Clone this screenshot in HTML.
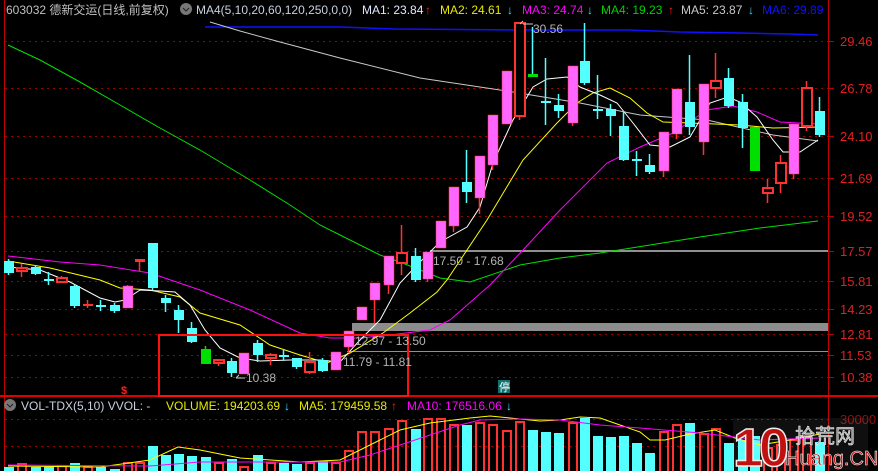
<!DOCTYPE html>
<html><head><meta charset="utf-8"><style>
html,body{margin:0;padding:0;background:#000;width:878px;height:471px;overflow:hidden}
svg{display:block}
text{font-family:"Liberation Sans","Noto Sans CJK SC",sans-serif}
</style></head><body>
<svg id="s" width="878" height="471" xmlns="http://www.w3.org/2000/svg" font-size="12">
<g stroke="#a00000" stroke-dasharray="2,4" stroke-width="1">
<line x1="5" x2="828" y1="41.5" y2="41.5"/><line x1="5" x2="828" y1="88.5" y2="88.5"/><line x1="5" x2="828" y1="136.5" y2="136.5"/><line x1="5" x2="828" y1="178.5" y2="178.5"/><line x1="5" x2="828" y1="216.5" y2="216.5"/><line x1="5" x2="828" y1="251.5" y2="251.5"/><line x1="5" x2="828" y1="281.5" y2="281.5"/><line x1="5" x2="828" y1="309.5" y2="309.5"/><line x1="5" x2="828" y1="334.5" y2="334.5"/><line x1="5" x2="828" y1="355.5" y2="355.5"/><line x1="5" x2="828" y1="377.5" y2="377.5"/>
<line x1="5" x2="828" y1="419.5" y2="419.5"/><line x1="5" x2="828" y1="446.5" y2="446.5"/>
</g>
<g stroke="#c00000"><line x1="4.5" x2="4.5" y1="0" y2="471"/><line x1="828.5" x2="828.5" y1="0" y2="471"/>
<line x1="828" x2="834" y1="41.5" y2="41.5"/><line x1="828" x2="834" y1="88.5" y2="88.5"/><line x1="828" x2="834" y1="136.5" y2="136.5"/><line x1="828" x2="834" y1="178.5" y2="178.5"/><line x1="828" x2="834" y1="216.5" y2="216.5"/><line x1="828" x2="834" y1="251.5" y2="251.5"/><line x1="828" x2="834" y1="281.5" y2="281.5"/><line x1="828" x2="834" y1="309.5" y2="309.5"/><line x1="828" x2="834" y1="334.5" y2="334.5"/><line x1="828" x2="834" y1="355.5" y2="355.5"/><line x1="828" x2="834" y1="377.5" y2="377.5"/>
</g>
<line x1="0" x2="878" y1="396" y2="396" stroke="#e00000" stroke-width="2"/>
<rect x="430" y="250" width="398" height="2" fill="#909090"/>
<rect x="352" y="323" width="476" height="8" fill="#8c8c8c"/>
<rect x="347" y="351" width="481" height="1" fill="#909090"/>
<g fill="none" stroke-width="1">
<polyline stroke="#1010ff" stroke-width="1.5" points="205,27 340,27 395,29 520,30 630,30 680,32 740,33 790,34 818,35"/>
<polyline stroke="#c8c8c8" points="210,22 240,31 280,42 340,58 420,78 513,92 580,103 640,115 707,120 773,135 818,141"/>
<polyline stroke="#00e000" points="8,45 40,60 80,82 120,105 160,128 200,150 250,180 290,205 320,225 350,240 380,255 400,262 440,278 470,282 520,265 560,258 600,253 650,245 700,237 760,228 818,221"/>
<polyline stroke="#ff00ff" points="8,256 60,262 100,265 150,273 200,290 250,310 300,333 330,338 360,338 390,335 430,330 450,320 490,285 523,250 560,210 607,163 640,147 673,133 707,110 733,106 757,112 780,122 818,124"/>
<polyline stroke="#ffff00" points="8,261 50,268 100,280 120,288 150,290 180,297 200,313 240,325 270,345 300,355 327,363 350,353 383,333 410,313 437,292 447,280 487,220 523,160 557,123 577,103 593,93 610,88 630,98 647,113 663,122 690,123 740,125 773,128 820,127"/>
<polyline stroke="#ffffff" points="8,267 40,270 70,282 100,298 115,302 125,300 140,290 160,291 175,292 190,305 205,330 220,348 240,358 260,361 290,360 320,360 340,362 360,340 380,320 400,283 420,262 440,242 467,227 480,207 493,163 513,120 533,87 547,79 567,77 580,87 600,95 617,103 633,123 650,145 670,147 690,137 710,103 728,97 740,102 757,117 773,140 783,152 800,152 818,140"/>
</g>
<g id="cd"></g>
<rect x="159" y="335" width="249" height="61" fill="none" stroke="#ff1010" stroke-width="2"/>
<g fill="#b4b4b4" style="font-size:12px">
<text x="533" y="33">30.56</text><text x="246" y="382">10.38</text>
<text x="433" y="265">17.50 - 17.68</text><text x="355" y="345">12.97 - 13.50</text><text x="343" y="366">11.79 - 11.81</text>
</g>
<path d="M520,24 l3,-3 M523,24 h10 M236,378 h9 M236,378 l3,-3" stroke="#ccc" fill="none"/>
<g fill="#e02020" style="font-size:13px">
<text x="840" y="46">29.46</text><text x="840" y="93">26.78</text><text x="840" y="141">24.10</text><text x="840" y="183">21.69</text><text x="840" y="221">19.52</text><text x="840" y="256">17.57</text><text x="840" y="286">15.81</text><text x="840" y="314">14.23</text><text x="840" y="339">12.81</text><text x="840" y="360">11.53</text><text x="840" y="382">10.38</text>
<text x="840" y="424" fill="#901010">30000</text>
</g>
<text x="121" y="394" fill="#ff2020" style="font-size:11px;font-weight:bold">$</text>
<rect x="498" y="380" width="12" height="13" fill="#107070"/><text x="499" y="391" fill="#fff" style="font-size:11px">停</text>
<text x="6" y="14" fill="#c0c0c0">603032 德新交运(日线,前复权)</text>
<circle cx="186" cy="9" r="6" fill="#777"/><path d="M183,8 l3,3 l3,-3" stroke="#222" fill="none"/>
<text x="196" y="14" fill="#c8d0e0">MA4(5,10,20,60,120,250,0,0)</text>
<text x="362" y="14" fill="#e0e8ff">MA1: 23.84</text><text x="425" y="14" fill="#ff2020">↑</text>
<text x="440" y="14" fill="#e8e800">MA2: 24.61</text><text x="507" y="14" fill="#40e0ff">↓</text>
<text x="522" y="14" fill="#ff00ff">MA3: 24.74</text><text x="587" y="14" fill="#40e0ff">↓</text>
<text x="601" y="14" fill="#00d000">MA4: 19.23</text><text x="668" y="14" fill="#ff2020">↑</text>
<text x="681" y="14" fill="#c8c8c8">MA5: 23.87</text><text x="748" y="14" fill="#40e0ff">↓</text>
<text x="762" y="14" fill="#1010ff">MA6: 29.89</text>
<circle cx="10" cy="405" r="6" fill="#777"/><path d="M7,404 l3,3 l3,-3" stroke="#222" fill="none"/>
<text x="21" y="410" fill="#c8d0e0">VOL-TDX(5,10) VVOL: -</text>
<text x="166" y="410" fill="#e8e800">VOLUME: 194203.69</text><text x="284" y="410" fill="#40e0ff">↓</text>
<text x="299" y="410" fill="#e8e800">MA5: 179459.58</text><text x="391" y="410" fill="#ff2020">↑</text>
<text x="407" y="410" fill="#ff00ff">MA10: 176516.06</text><text x="506" y="410" fill="#40e0ff">↓</text>
<g id="vb"></g>
<g fill="none" stroke-width="1">
<polyline stroke="#ffff00" points="8,466 100,467 150,460 178,447 200,450 240,458 300,462 340,460 360,450 380,440 400,430 430,423 470,418 490,416 510,418 540,421 560,420 580,417 600,418 620,425 640,432 650,440 665,440 690,434 715,430 735,438 760,445 790,440 820,434"/>
<polyline stroke="#ff00ff" points="8,465 150,466 200,462 250,462 340,462 370,455 400,445 430,435 460,425 480,420 520,419 560,420 600,425 640,428 700,433 760,440 820,438"/>
</g>
<rect x="733" y="418" width="135" height="52" fill="#fff" opacity="0.06"/>
<text x="733" y="466" fill="#c01010" stroke="#eee" stroke-width="1.5" style="font-size:54px;font-weight:bold;letter-spacing:-4px">10</text>
<text x="795" y="443" fill="#999" stroke="#fff" stroke-width="0.5" style="font-size:20px">拾荒网</text>
<text x="785" y="465" fill="#c01010" stroke="#fff" stroke-width="0.5" style="font-size:20px">Huang.CN</text>
</svg>
<script>
var C=[[8,'c',261,273,259,275],[21,'r',268,271,264,277],[35,'c',267,274,265,275],[48,'c',279,281,272,285],[61,'r',278,282,276,282],[74,'c',286,306,285,308],[87,'rf',304,306,300,308],[100,'c',305,307,300,311],[114,'c',305,311,303,313],[127,'p',286,308,285,308],[139,'rf',259,262,259,271],[152,'c',243,288,243,290],[165,'c',298,303,295,312],[178,'c',310,320,305,333],[191,'c',328,342,322,343],[205,'g',349,364,346,364],[218,'r',360,363,360,366],[231,'c',361,373,358,377],[243,'p',353,374,353,374],[257,'c',343,355,340,362],[270,'r',355,358,353,365],[283,'c',355,357,349,361],[296,'c',358,367,358,369],[309,'r',362,372,352,374],[322,'c',360,371,358,372],[335,'p',352,370,352,370],[348,'p',331,347,331,353],[361,'p',307,320,307,320],[374,'p',283,300,283,323],[388,'p',256,285,256,294],[401,'r',253,263,225,275],[415,'c',256,280,248,282],[427,'p',252,279,252,282],[440,'p',221,248,221,248],[453,'p',187,226,187,232],[466,'c',182,192,150,203],[479,'p',156,198,156,214],[492,'p',115,165,115,170],[506,'p',71,124,71,124],[519,'r',23,116,22,120],[532,'gc',74,77,27,77],[545,'c',101,103,58,125],[558,'c',105,111,94,118],[572,'p',66,123,66,126],[584,'c',61,83,23,85],[597,'c',109,111,75,119],[610,'c',109,116,104,136],[623,'c',126,160,111,161],[636,'c',159,161,151,176],[649,'c',165,172,154,174],[663,'p',132,171,132,177],[676,'p',89,134,89,139],[689,'c',102,127,55,135],[703,'p',84,142,84,155],[715,'r',81,88,53,98],[728,'c',78,106,68,108],[742,'c',102,128,94,148],[754,'g',127,171,127,171],[767,'r',188,193,179,203],[780,'r',163,183,155,193],[793,'p',124,174,124,179],[806,'r',88,126,81,131],[819,'c',111,135,97,137]];
var h='';C.forEach(function(c){var x=c[0],t=c[1],bt=c[2],bb=c[3],wt=c[4],wb=c[5];
var wc=(t=='c'||t=='gc')?'#54ffff':(t=='g'?'#00e000':'#ff3232');
h+='<line x1="'+(x+.5)+'" x2="'+(x+.5)+'" y1="'+wt+'" y2="'+wb+'" stroke="'+wc+'" stroke-width="1.5"/>';
var f=t=='c'?'#54ffff':t=='p'?'#ff66ff':(t=='g'||t=='gc')?'#00e000':t=='rf'?'#ff3232':'#000';
var hh=Math.max(bb-bt,2);
if(t=='r')h+='<rect x="'+(x-4)+'" y="'+bt+'" width="10" height="'+hh+'" fill="#000" stroke="#ff3232" stroke-width="2"/>';
else h+='<rect x="'+(x-4)+'" y="'+bt+'" width="10" height="'+hh+'" fill="'+f+'"'+(t=='p'?' stroke="#ff3232" stroke-width="0.5"':'')+'/>';});
document.getElementById('cd').innerHTML=h;
var V=[[8,'c',467],[21,'r',464],[35,'c',467],[48,'c',467],[61,'r',466],[74,'c',463],[87,'r',467],[100,'c',467],[114,'c',469],[127,'r',463],[139,'r',463],[152,'c',446],[165,'c',455],[178,'c',454],[191,'c',456],[205,'c',457],[218,'r',463],[231,'c',459],[243,'r',467],[257,'c',455],[270,'r',463],[283,'c',463],[296,'c',464],[309,'r',463],[322,'c',461],[335,'r',463],[348,'r',451],[361,'r',432],[374,'r',432],[388,'r',429],[401,'r',421],[415,'c',429],[427,'r',419],[440,'r',419],[453,'r',425],[466,'c',425],[479,'r',423],[492,'r',425],[506,'r',431],[519,'r',422],[532,'c',430],[545,'c',432],[558,'c',433],[572,'r',423],[584,'c',418],[597,'c',436],[610,'c',437],[623,'c',436],[636,'c',443],[649,'c',453],[663,'r',432],[676,'r',425],[689,'c',423],[703,'r',434],[715,'r',429],[728,'c',443],[742,'c',440],[754,'c',436],[767,'r',448],[780,'r',445],[793,'r',440],[806,'r',436],[819,'c',442]];
var g='';V.forEach(function(v){if(v[1]=='c')g+='<rect x="'+(v[0]-4)+'" y="'+v[2]+'" width="10" height="'+(471-v[2])+'" fill="#54ffff"/>';else g+='<rect x="'+(v[0]-3)+'" y="'+v[2]+'" width="8" height="'+(472-v[2])+'" fill="none" stroke="#ff3232" stroke-width="2"/>';});
document.getElementById('vb').innerHTML=g;
</script>
</body></html>
